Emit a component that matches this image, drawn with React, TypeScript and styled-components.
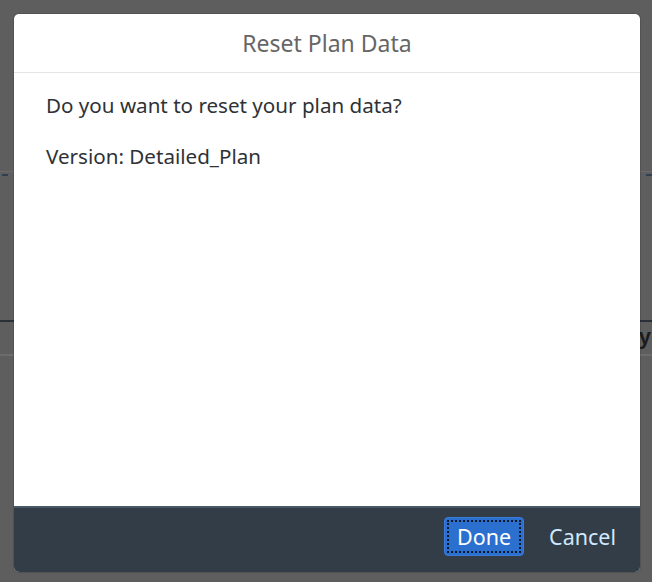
import React from "react";
import styled, { createGlobalStyle } from "styled-components";

const Global = createGlobalStyle`
  html, body { margin: 0; padding: 0; }
  body {
    width: 652px;
    height: 582px;
    overflow: hidden;
    background: #5e5e5e;
    font-family: "Noto Sans", "Liberation Sans", sans-serif;
  }
`;

const Page = styled.div`
  position: relative;
  width: 652px;
  height: 582px;
  background: #5e5e5e;
  overflow: hidden;
`;

/* faded page content behind the overlay */
const Behind = styled.div`
  display: flex;
  flex-direction: column;
  padding-top: 171px;
`;

const ThinLine = styled.div<{ $color: string }>`
  height: 1px;
  background: ${(p) => p.$color};
`;

const DashRow = styled.div`
  display: flex;
  gap: 6px;
  padding: 2px 0 0 2px;
  height: 2px;
  justify-content: space-between;
`;

const Dash = styled.span`
  width: 6px;
  height: 2px;
  background: #2f3f52;
`;

const Spacer = styled.div<{ $h: number }>`
  height: ${(p) => p.$h}px;
`;

const HeaderRow = styled.div`
  display: flex;
  justify-content: flex-end;
  height: 32px;
  align-items: center;
  border-top: 2px solid #2a3038;
  border-bottom: 2px solid #6c6c6c;
`;

const BehindText = styled.span`
  font-family: "Liberation Sans", sans-serif;
  font-weight: bold;
  font-size: 22px;
  color: #1c1c1c;
  margin-right: 1px;
  margin-top: -2px;
`;

const Dialog = styled.div`
  position: absolute;
  top: 14px;
  left: 14px;
  width: 626px;
  height: 558px;
  background: #ffffff;
  border-radius: 5px;
  box-shadow: 0 0 0 1px rgba(0, 0, 0, 0.12);
  display: flex;
  flex-direction: column;
  overflow: hidden;
`;

const Header = styled.div`
  height: 58px;
  display: flex;
  align-items: center;
  justify-content: center;
  border-bottom: 1px solid #e5e5e5;
  flex-shrink: 0;
`;

const Title = styled.h1`
  margin: 0;
  font-size: 23px;
  font-weight: 400;
  color: #666666;
`;

const Content = styled.div`
  flex: 1;
  padding: 18px 32px;
  display: flex;
  flex-direction: column;
  gap: 23px;
`;

const Para = styled.p`
  margin: 0;
  font-size: 20.6px;
  line-height: 28px;
  color: #2e3236;
`;

const Footer = styled.div`
  height: 66px;
  background: #333d47;
  border-top: 2px solid #4a5866;
  display: flex;
  align-items: center;
  justify-content: flex-end;
  gap: 12px;
  padding: 0 11px 8px 0;
  flex-shrink: 0;
  box-sizing: border-box;
`;

const Button = styled.button<{ $primary?: boolean }>`
  height: 39px;
  min-width: 80px;
  padding: 0 12px;
  border-radius: 4px;
  border: 1px solid ${(p) => (p.$primary ? "#3b7ad9" : "transparent")};
  background: ${(p) => (p.$primary ? "#2b6fcf" : "transparent")};
  color: ${(p) => (p.$primary ? "#ffffff" : "#d1e8ff")};
  font-family: "Noto Sans", "Liberation Sans", sans-serif;
  font-size: 21.5px;
  position: relative;
  cursor: pointer;
  ${(p) =>
    p.$primary &&
    `
    &::after {
      content: "";
      position: absolute;
      inset: 2px;
      border: 2px dotted #0c1a2e;
      border-radius: 1px;
    }
  `}
`;

export default function App() {
  return (
    <Page>
      <Global />
      <Behind>
        <ThinLine $color="#6a6a6a" />
        <DashRow>
          <Dash />
          <Dash />
        </DashRow>
        <Spacer $h={144} />
        <HeaderRow>
          <BehindText>y</BehindText>
        </HeaderRow>
      </Behind>
      <Dialog role="dialog" aria-label="Reset Plan Data">
        <Header>
          <Title>Reset Plan Data</Title>
        </Header>
        <Content>
          <Para>Do you want to reset your plan data?</Para>
          <Para>Version: Detailed_Plan</Para>
        </Content>
        <Footer>
          <Button $primary>Done</Button>
          <Button>Cancel</Button>
        </Footer>
      </Dialog>
    </Page>
  );
}
